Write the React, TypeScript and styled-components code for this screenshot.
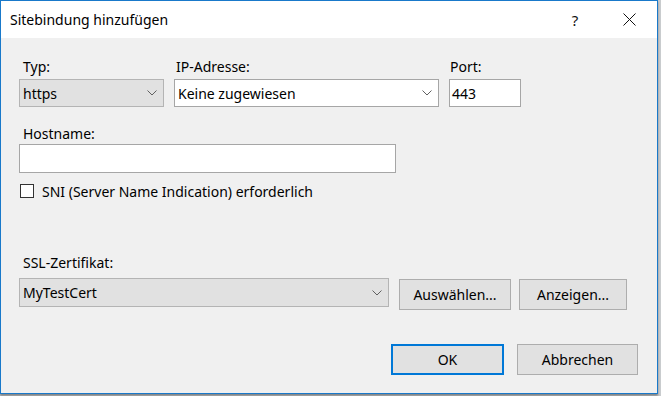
import { createGlobalStyle, styled } from 'styled-components'

const GlobalStyle = createGlobalStyle`
  html, body {
    margin: 0;
    padding: 0;
  }
  body {
    width: 661px;
    height: 396px;
    overflow: hidden;
    background: #c9ccce;
    font-family: "Noto Sans", "Open Sans", sans-serif;
    color: #000;
  }
`

const Window = styled.div`
  box-sizing: border-box;
  width: 658px;
  height: 394px;
  border: 1px solid #1979ca;
  background: #f0f0f0;
  display: flex;
  flex-direction: column;
  box-shadow: 0 2px 2px rgba(0, 0, 0, 0.35);
`

const TitleBar = styled.div`
  height: 37px;
  flex-shrink: 0;
  background: #fff;
  display: flex;
  align-items: center;
  padding-left: 9px;
`

const Title = styled.span`
  flex: 1;
  font-size: 14px;
  color: #000;
`

const CaptionButton = styled.div<{ $gap?: number }>`
  width: 46px;
  height: 37px;
  display: flex;
  align-items: center;
  justify-content: center;
  margin-right: ${p => p.$gap ?? 0}px;
  font-size: 15px;
  color: #111;
`

const Body = styled.div`
  flex: 1;
  padding: 20px 19px 0 18px;
  display: flex;
  flex-direction: column;
  font-size: 14px;
`

const Row = styled.div<{ $gap?: number; $top?: number }>`
  display: flex;
  align-items: flex-start;
  gap: ${p => p.$gap ?? 10}px;
  margin-top: ${p => p.$top ?? 0}px;
`

const Field = styled.div<{ $width: number }>`
  width: ${p => p.$width}px;
  flex-shrink: 0;
  display: flex;
  flex-direction: column;
`

const Label = styled.div<{ $indent?: number; $top?: number; $bottom?: number }>`
  height: 17px;
  line-height: 17px;
  margin: ${p => p.$top ?? 0}px 0 ${p => p.$bottom ?? 4}px ${p => p.$indent ?? 4}px;
  white-space: nowrap;
`

const Combo = styled.div<{ $editable?: boolean; $height?: number; $width?: number }>`
  box-sizing: border-box;
  height: ${p => p.$height ?? 28}px;
  width: ${p => (p.$width ? `${p.$width}px` : 'auto')};
  flex-shrink: 0;
  border: 1px solid ${p => (p.$editable ? '#a6a6a6' : '#b4b4b4')};
  background: ${p => (p.$editable ? '#fff' : '#e1e1e1')};
  display: flex;
  align-items: center;
  padding: 0 6px 0 3px;
  white-space: nowrap;
`

const ComboText = styled.span`
  flex: 1;
`

const TextBox = styled.div<{ $width: number; $height: number }>`
  box-sizing: border-box;
  width: ${p => p.$width}px;
  height: ${p => p.$height}px;
  border: 1px solid #a6a6a6;
  background: #fff;
  display: flex;
  align-items: center;
  padding-left: 2px;
`

const CheckRow = styled.label`
  display: flex;
  align-items: center;
  gap: 8px;
  height: 16px;
  margin-top: 10px;
  padding-left: 1px;
`

const CheckBox = styled.span`
  box-sizing: border-box;
  width: 14px;
  height: 14px;
  border: 1px solid #333;
  background: #fff;
`

const Button = styled.div<{ $width: number; $default?: boolean }>`
  box-sizing: border-box;
  width: ${p => p.$width}px;
  height: 31px;
  border: ${p => (p.$default ? '2px solid #0078d7' : '1px solid #adadad')};
  background: #e1e1e1;
  display: flex;
  align-items: center;
  justify-content: center;
`

const Footer = styled.div`
  display: flex;
  justify-content: flex-end;
  gap: 13px;
  margin-top: 34px;
`

function Chevron() {
  return (
    <svg width="10" height="6" viewBox="0 0 10 6">
      <path d="M0.5 0.5 L5 5 L9.5 0.5" fill="none" stroke="#606060" strokeWidth="1" />
    </svg>
  )
}

function CloseIcon() {
  return (
    <svg width="13" height="13" viewBox="0 0 13 13">
      <path d="M0.5 0.5 L12.5 12.5 M12.5 0.5 L0.5 12.5" stroke="#111" strokeWidth="1" />
    </svg>
  )
}

function App() {
  return (
    <>
      <GlobalStyle />
      <Window>
        <TitleBar>
          <Title>Sitebindung hinzufügen</Title>
          <CaptionButton $gap={8}>?</CaptionButton>
          <CaptionButton $gap={5}>
            <CloseIcon />
          </CaptionButton>
        </TitleBar>
        <Body>
          <Row $gap={10}>
            <Field $width={145}>
              <Label>Typ:</Label>
              <Combo>
                <ComboText>https</ComboText>
                <Chevron />
              </Combo>
            </Field>
            <Field $width={265}>
              <Label $indent={2}>IP-Adresse:</Label>
              <Combo $editable>
                <ComboText>Keine zugewiesen</ComboText>
                <Chevron />
              </Combo>
            </Field>
            <Field $width={72}>
              <Label $indent={1}>Port:</Label>
              <TextBox $width={72} $height={28}>443</TextBox>
            </Field>
          </Row>

          <Label $top={18} $bottom={2}>Hostname:</Label>
          <TextBox $width={377} $height={29} />

          <CheckRow>
            <CheckBox />
            SNI (Server Name Indication) erforderlich
          </CheckRow>

          <Label $top={55} $bottom={7}>SSL-Zertifikat:</Label>
          <Row $gap={10}>
            <Combo $width={370} $height={29}>
              <ComboText>MyTestCert</ComboText>
              <Chevron />
            </Combo>
            <Row $gap={8} $top={1}>
              <Button $width={112}>Auswählen...</Button>
              <Button $width={108}>Anzeigen...</Button>
            </Row>
          </Row>

          <Footer>
            <Button $width={113} $default>OK</Button>
            <Button $width={121}>Abbrechen</Button>
          </Footer>
        </Body>
      </Window>
    </>
  )
}

export default App
